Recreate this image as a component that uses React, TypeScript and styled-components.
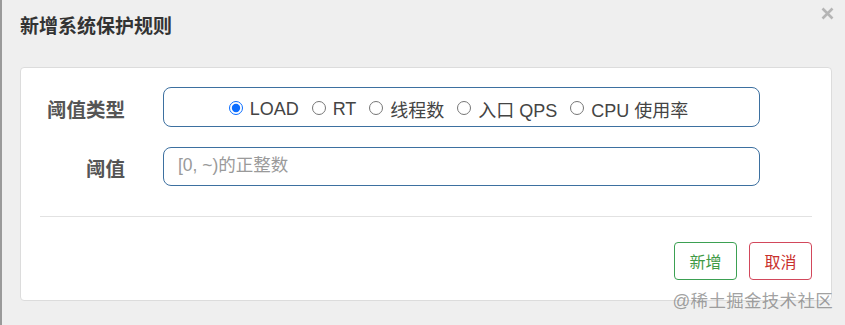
import styled, { createGlobalStyle } from 'styled-components';

const GlobalStyle = createGlobalStyle`
  html, body {
    margin: 0;
    padding: 0;
    background: #efefef;
  }
  body {
    font-family: "Liberation Sans", "Noto Sans CJK SC", sans-serif;
  }
`;

const Dialog = styled.div`
  position: relative;
  box-sizing: border-box;
  width: 845px;
  height: 325px;
  background: #efefef;
  border-left: 2px solid #9a9a9a;
  display: flex;
  flex-direction: column;
`;

const Header = styled.div`
  display: flex;
  justify-content: space-between;
  align-items: flex-start;
  height: 67px;
  box-sizing: border-box;
  padding: 0 10px 0 18px;
`;

const Title = styled.h4`
  margin: 15px 0 0;
  font-size: 19px;
  line-height: 23px;
  font-weight: bold;
  color: #333;
`;

const Close = styled.button`
  margin-top: 6px;
  padding: 0;
  border: none;
  background: none;
  width: 15px;
  height: 15px;
  cursor: pointer;
  display: flex;
`;

const Panel = styled.div`
  box-sizing: border-box;
  margin: 0 13px 0 18px;
  height: 234px;
  background: #fff;
  border: 1px solid #dcdcdc;
  border-radius: 4px;
  padding: 19px 19px 0 0;
  display: flex;
  flex-direction: column;
`;

const Form = styled.div`
  display: flex;
  flex-direction: column;
  gap: 20px;
  padding-right: 52px;
`;

const Row = styled.div`
  display: flex;
  align-items: center;
  gap: 38px;
`;

const Label = styled.label`
  width: 104px;
  text-align: right;
  font-size: 19.5px;
  font-weight: bold;
  color: #555;
  flex-shrink: 0;
  padding-top: 2px;
`;

const Box = styled.div<{ $h: number }>`
  flex: 1;
  box-sizing: border-box;
  height: ${({ $h }) => $h}px;
  border: 1px solid #3d70a0;
  border-radius: 8px;
  display: flex;
  align-items: center;
`;

const RadioGroup = styled(Box)`
  justify-content: center;
  gap: 13px;
  padding: 4px 6px 0 0;
`;

const Option = styled.label`
  display: flex;
  align-items: center;
  gap: 7px;
  font-size: 18px;
  color: #444;
  cursor: pointer;
`;

const Radio = styled.input`
  margin: 0 0 2px;
  width: 14px;
  height: 14px;
  accent-color: #0b6dff;
`;

const Input = styled.input`
  width: 100%;
  height: 100%;
  box-sizing: border-box;
  border: none;
  background: transparent;
  padding: 0 14px 2px;
  font-family: inherit;
  font-size: 17.5px;
  color: #444;
  outline: none;
  &::placeholder {
    color: #9a9a9a;
  }
`;

const Divider = styled.hr`
  margin: 30px 0 0 19px;
  border: none;
  border-top: 1px solid #e2e2e2;
`;

const Footer = styled.div`
  display: flex;
  justify-content: flex-end;
  gap: 12px;
  margin-top: 25px;
`;

const Button = styled.button<{ $color: string; $border: string }>`
  width: 63px;
  height: 38px;
  background: #fff;
  border: 1px solid ${({ $border }) => $border};
  border-radius: 4px;
  color: ${({ $color }) => $color};
  font-family: inherit;
  font-size: 16px;
  cursor: pointer;
`;

const Watermark = styled.div`
  position: absolute;
  right: 12px;
  bottom: 13px;
  font-size: 17.5px;
  color: rgba(120, 120, 120, 0.7);
  letter-spacing: 0.3px;
`;

const options = ['LOAD', 'RT', '线程数', '入口 QPS', 'CPU 使用率'];

const App = () => {
  return (
    <>
      <GlobalStyle />
      <Dialog>
        <Header>
          <Title>新增系统保护规则</Title>
          <Close aria-label='close'>
            <svg width='15' height='15' viewBox='0 0 15 15'>
              <path d='M2.5 2.5 L12.5 12.5 M12.5 2.5 L2.5 12.5' stroke='#b5b5b5' strokeWidth='2.6' />
            </svg>
          </Close>
        </Header>
        <Panel>
          <Form>
            <Row>
              <Label>阈值类型</Label>
              <RadioGroup $h={40}>
                {options.map((opt, i) => (
                  <Option key={opt}>
                    <Radio type='radio' name='grade' defaultChecked={i === 0} />
                    {opt}
                  </Option>
                ))}
              </RadioGroup>
            </Row>
            <Row>
              <Label>阈值</Label>
              <Box $h={39}>
                <Input placeholder='[0, ~)的正整数' />
              </Box>
            </Row>
          </Form>
          <Divider />
          <Footer>
            <Button $color='#3f9a45' $border='#3ba052'>新增</Button>
            <Button $color='#c9302c' $border='#d2475b'>取消</Button>
          </Footer>
        </Panel>
        <Watermark>@稀土掘金技术社区</Watermark>
      </Dialog>
    </>
  );
};

export default App;
